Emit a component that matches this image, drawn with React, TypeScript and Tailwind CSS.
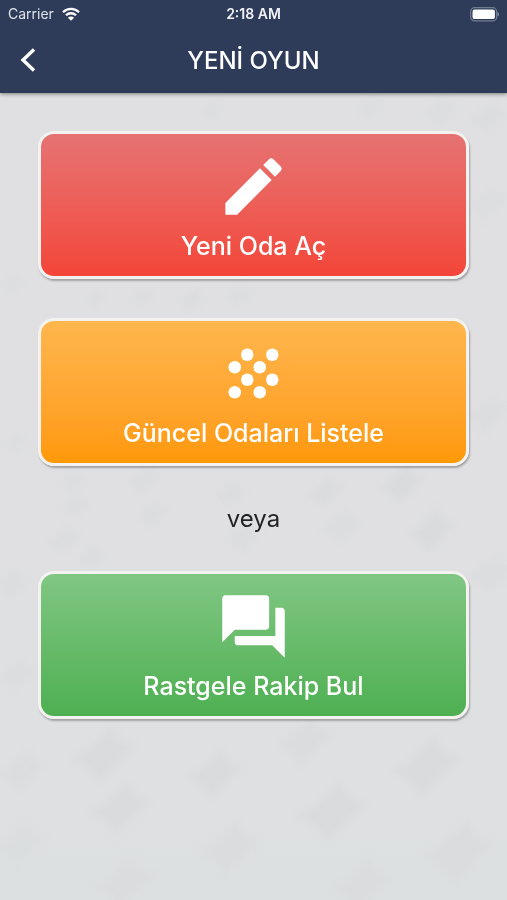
import type { ReactNode } from "react";

type Spot = { x: number; y: number; s: number; o: number };

// Gaps left between the overlapping discs of the wallpaper.
const spots: Spot[] = [
  { x: 440, y: 18, s: 18, o: 0.3 },
  { x: 370, y: 14, s: 14, o: 0.3 },
  { x: 210, y: 18, s: 12, o: 0.3 },
  { x: 488, y: 24, s: 18, o: 0.4 },
  { x: 488, y: 110, s: 20, o: 0.3 },
  { x: 95, y: 206, s: 9, o: 0.5 },
  { x: 142, y: 204, s: 10, o: 0.5 },
  { x: 192, y: 206, s: 11, o: 0.5 },
  { x: 240, y: 202, s: 13, o: 0.4 },
  { x: 12, y: 190, s: 12, o: 0.3 },
  { x: 488, y: 320, s: 22, o: 0.4 },
  { x: 16, y: 350, s: 14, o: 0.3 },
  { x: 72, y: 388, s: 13, o: 0.4 },
  { x: 145, y: 386, s: 16, o: 0.6 },
  { x: 75, y: 412, s: 13, o: 0.6 },
  { x: 153, y: 420, s: 15, o: 0.6 },
  { x: 230, y: 400, s: 15, o: 0.6 },
  { x: 325, y: 398, s: 18, o: 0.7 },
  { x: 402, y: 390, s: 22, o: 0.8 },
  { x: 64, y: 446, s: 15, o: 0.5 },
  { x: 243, y: 444, s: 16, o: 0.5 },
  { x: 342, y: 432, s: 19, o: 0.6 },
  { x: 432, y: 436, s: 24, o: 0.9 },
  { x: 92, y: 464, s: 14, o: 0.6 },
  { x: 12, y: 490, s: 18, o: 0.4 },
  { x: 490, y: 480, s: 22, o: 0.4 },
  { x: 18, y: 580, s: 18, o: 0.4 },
  { x: 104, y: 660, s: 30, o: 0.9 },
  { x: 22, y: 676, s: 22, o: 0.5 },
  { x: 215, y: 679, s: 26, o: 0.9 },
  { x: 305, y: 646, s: 26, o: 0.7 },
  { x: 426, y: 672, s: 32, o: 0.9 },
  { x: 120, y: 714, s: 28, o: 0.9 },
  { x: 332, y: 717, s: 32, o: 0.9 },
  { x: 20, y: 750, s: 24, o: 0.4 },
  { x: 229, y: 754, s: 28, o: 0.7 },
  { x: 458, y: 758, s: 34, o: 0.7 },
  { x: 125, y: 788, s: 28, o: 0.7 },
  { x: 362, y: 790, s: 28, o: 0.7 },
];

function Wallpaper() {
  return (
    <svg
      aria-hidden="true"
      className="absolute inset-0 h-full w-full"
      viewBox="0 0 507 806"
      preserveAspectRatio="xMidYMin slice"
    >
      <defs>
        <filter id="soften" x="-20%" y="-20%" width="140%" height="140%">
          <feGaussianBlur stdDeviation="3" />
        </filter>
      </defs>
      <g fill="#d8dadc" filter="url(#soften)">
        {spots.map(({ x, y, s, o }) => (
          <path
            key={`${x}-${y}`}
            opacity={o}
            transform={`translate(${x} ${y}) rotate(14) scale(${s})`}
            d="M0-1Q.2-.4 1-.5Q.5 0 .5.3Q.2.5.1 1Q-.2.5-1 .4Q-.4 0-.4-.3Q-.1-.5 0-1Z"
          />
        ))}
      </g>
    </svg>
  );
}

function Icon({ children }: { children: ReactNode }) {
  return (
    <svg aria-hidden="true" viewBox="0 0 24 24" className="size-[75px]" fill="currentColor">
      {children}
    </svg>
  );
}

function Choice({ label, tone, children }: { label: string; tone: string; children: ReactNode }) {
  return (
    <button
      type="button"
      className={`flex w-full cursor-pointer flex-col items-center gap-1.5 rounded-2xl border-3 border-[#f3f2f0] bg-linear-to-b bg-origin-border pt-[15px] pb-[14px] text-white shadow-[1px_2px_2px_rgba(0,0,0,0.28)] ${tone}`}
    >
      <Icon>{children}</Icon>
      <span className="text-[25px] leading-8 font-medium">{label}</span>
    </button>
  );
}

export default function App() {
  return (
    <div className="flex min-h-screen flex-col bg-linear-to-b from-[#e0e0e2] from-60% to-[#dde0e1] font-['Inter','Roboto',sans-serif]">
      <header className="relative z-10 bg-[#2e3c5a] text-white shadow-[0_1px_4px_rgba(0,0,0,0.45)]">
        <div className="grid h-7 grid-cols-3 items-center px-2 text-[#f0f2f6]">
          <div className="flex items-center gap-2 text-sm text-[#dfe3ea]">
            <span>Carrier</span>
            <svg aria-label="Wi-Fi" role="img" viewBox="0 0 18 14" className="h-[14px] w-[18px]" fill="none" stroke="#fff" strokeWidth="2.3">
              <path d="M1 5.2a11.4 11.4 0 0 1 16 0" />
              <path d="M4 8.3a7.1 7.1 0 0 1 10 0" />
              <path d="M9 13.8 5.9 10.7a4.4 4.4 0 0 1 6.2 0Z" fill="#fff" stroke="none" />
            </svg>
          </div>
          <time className="text-center text-sm font-semibold">2:18 AM</time>
          <svg aria-label="Battery full" role="img" viewBox="0 0 31 15" className="h-[15px] w-[31px] justify-self-end">
            <rect x="2.7" y=".7" width="26" height="13.2" rx="4" fill="none" stroke="#727d93" strokeWidth="1.2" />
            <rect x="4.5" y="2.5" width="22.4" height="9.6" rx="2.2" fill="#fff" />
            <path d="M29.500 5v4.600c.9-.4 1.400-1.300 1.400-2.300S30.400 5.400 29.500 5Z" fill="#8f98aa" />
          </svg>
        </div>
        <div className="grid h-[65px] grid-cols-[56px_1fr_56px] items-center">
          <button type="button" aria-label="Geri" className="flex h-full cursor-pointer items-center justify-center">
            <svg aria-hidden="true" viewBox="0 0 16 26" className="h-[26px] w-4" fill="none" stroke="#fff" strokeWidth="3.4">
              <path d="M14 1.500 3 12l11 10.500" />
            </svg>
          </button>
          <h1 className="text-center text-2xl font-medium">YENİ OYUN</h1>
        </div>
      </header>

      <main className="relative flex-1 overflow-hidden">
        <Wallpaper />
        <div className="relative flex flex-col px-[38px] pt-[38px] pb-10">
          <Choice label="Yeni Oda Aç" tone="from-[#e57373] to-[#f44336]">
            <path d="M3 17.250V21h3.750L17.810 9.940l-3.750-3.750L3 17.250zM20.710 7.040c.39-.39.39-1.020 0-1.410l-2.340-2.340c-.39-.39-1.020-.39-1.410 0l-1.830 1.830 3.750 3.750 1.830-1.830z" />
          </Choice>
          <div className="h-[39px]" />
          <Choice label="Güncel Odaları Listele" tone="from-[#ffb74d] to-[#ff9800]">
            <circle cx="10" cy="6" r="2" />
            <circle cx="18" cy="6" r="2" />
            <circle cx="6" cy="10" r="2" />
            <circle cx="14" cy="10" r="2" />
            <circle cx="10" cy="14" r="2" />
            <circle cx="18" cy="14" r="2" />
            <circle cx="6" cy="18" r="2" />
            <circle cx="14" cy="18" r="2" />
          </Choice>
          <p className="py-9 text-center text-2xl leading-[33px] text-[#222325]">veya</p>
          <Choice label="Rastgele Rakip Bul" tone="from-[#81c784] to-[#4caf50]">
            <path d="M21 6h-2v9H6v2c0 .55.45 1 1 1h11l4 4V7c0-.55-.45-1-1-1zm-4 6V3c0-.55-.45-1-1-1H3c-.55 0-1 .45-1 1v14l4-4h10c.55 0 1-.45 1-1z" />
          </Choice>
        </div>
      </main>
    </div>
  );
}
